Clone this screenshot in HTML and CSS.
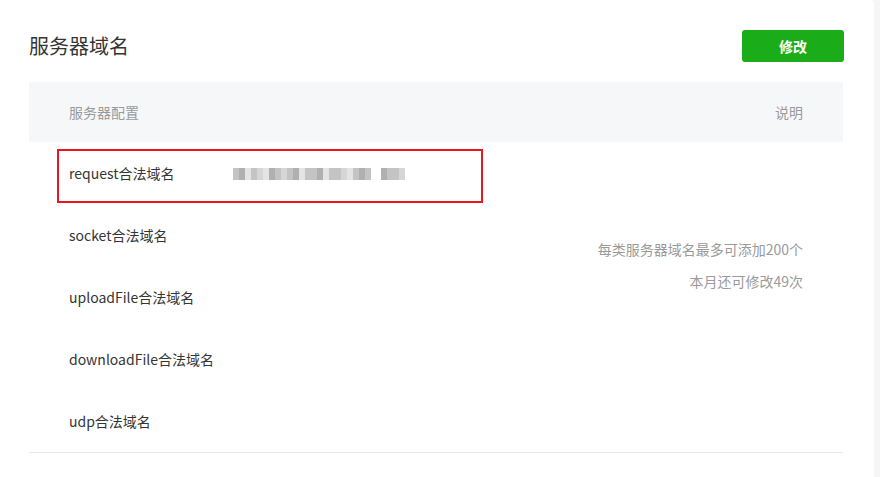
FILE: index.html
```html
<!DOCTYPE html>
<html lang="zh">
<head>
<meta charset="utf-8">
<title>服务器域名</title>
<link rel="stylesheet" href="styles.css">
</head>
<body>
<div class="card">
  <div class="head">
    <h2 class="title">服务器域名</h2>
    <button class="btn">修改</button>
  </div>
  <div class="table">
    <div class="thead">
      <span>服务器配置</span>
      <span>说明</span>
    </div>
    <div class="tbody">
      <div class="rows">
        <div class="row">
          <span class="label">request合法域名</span>
          <span class="blur">
            <i class="b2"></i><i class="b3"></i><i class="b1"></i><i class="b2"></i><i class="b4"></i><i class="b1"></i><i class="b3"></i><i class="b2"></i><i class="b4"></i><i class="b2"></i><i class="b3"></i><i class="b1"></i><i class="b2"></i><i class="b2"></i><i class="b3"></i><i class="b1"></i><i class="b2"></i><i class="b2"></i><i class="b4"></i><i class="b1"></i><i class="b2"></i><i class="b3"></i><i class="b2"></i><i class="sp"></i><i class="b3"></i><i class="b2"></i><i class="b2"></i><i class="b4"></i>
          </span>
          <div class="mark"></div>
        </div>
        <div class="row"><span class="label">socket合法域名</span></div>
        <div class="row"><span class="label">uploadFile合法域名</span></div>
        <div class="row"><span class="label">downloadFile合法域名</span></div>
        <div class="row"><span class="label">udp合法域名</span></div>
      </div>
      <div class="desc">
        <p>每类服务器域名最多可添加200个</p>
        <p>本月还可修改49次</p>
      </div>
    </div>
  </div>
</div>
</body>
</html>
```

FILE: styles.css
```css
html, body {
  margin: 0;
  padding: 0;
  height: 100%;
}
body {
  background: #f5f6f8;
  font-family: "Noto Sans CJK SC", "Noto Sans", sans-serif;
  color: #353535;
}
.card {
  width: 874px;
  height: 477px;
  background: #fff;
  border-top-right-radius: 4px;
  box-sizing: border-box;
  padding: 30px 31px 0 29px;
}
.head {
  display: flex;
  justify-content: space-between;
  align-items: center;
  height: 32px;
}
.title {
  margin: 0;
  font-size: 20px;
  font-weight: normal;
  color: #353535;
  line-height: 32px;
}
.btn {
  width: 102px;
  height: 32px;
  margin-right: -1px;
  border: none;
  border-radius: 3px;
  background: #1aad19;
  color: #fff;
  font-family: inherit;
  font-size: 14px;
  font-weight: bold;
  padding: 0;
}
.table {
  margin-top: 20px;
  border-bottom: 1px solid #e7e7eb;
}
.thead {
  height: 60px;
  background: #f6f7f9;
  display: flex;
  justify-content: space-between;
  align-items: center;
  padding: 0 40px;
  font-size: 14px;
  color: #9a9a9a;
}
.tbody {
  display: flex;
  justify-content: space-between;
}
.rows {
  display: flex;
  flex-direction: column;
}
.row {
  position: relative;
  height: 62px;
  display: flex;
  align-items: center;
  padding-left: 40px;
  font-size: 14px;
  color: #353535;
}
.label {
  width: 164px;
  margin-top: -1px;
}
.blur {
  display: flex;
  height: 12px;
  margin-top: 2px;
}
.blur i {
  display: block;
  width: 6px;
  height: 12px;
}
.blur .b1 { background: #e4e4e4; }
.blur .b2 { background: #c4c4c4; }
.blur .b3 { background: #b0b0b0; }
.blur .b4 { background: #d6d6d6; }
.blur .sp { width: 10px; background: transparent; }
.mark {
  position: absolute;
  left: 28px;
  top: 7px;
  width: 426px;
  height: 54px;
  box-sizing: border-box;
  border: 2px solid #e8161f;
}
.desc {
  padding: 91px 40px 0 0;
  text-align: right;
  font-size: 14px;
  color: #9a9a9a;
}
.desc p {
  margin: 0;
  line-height: 32px;
}
```
